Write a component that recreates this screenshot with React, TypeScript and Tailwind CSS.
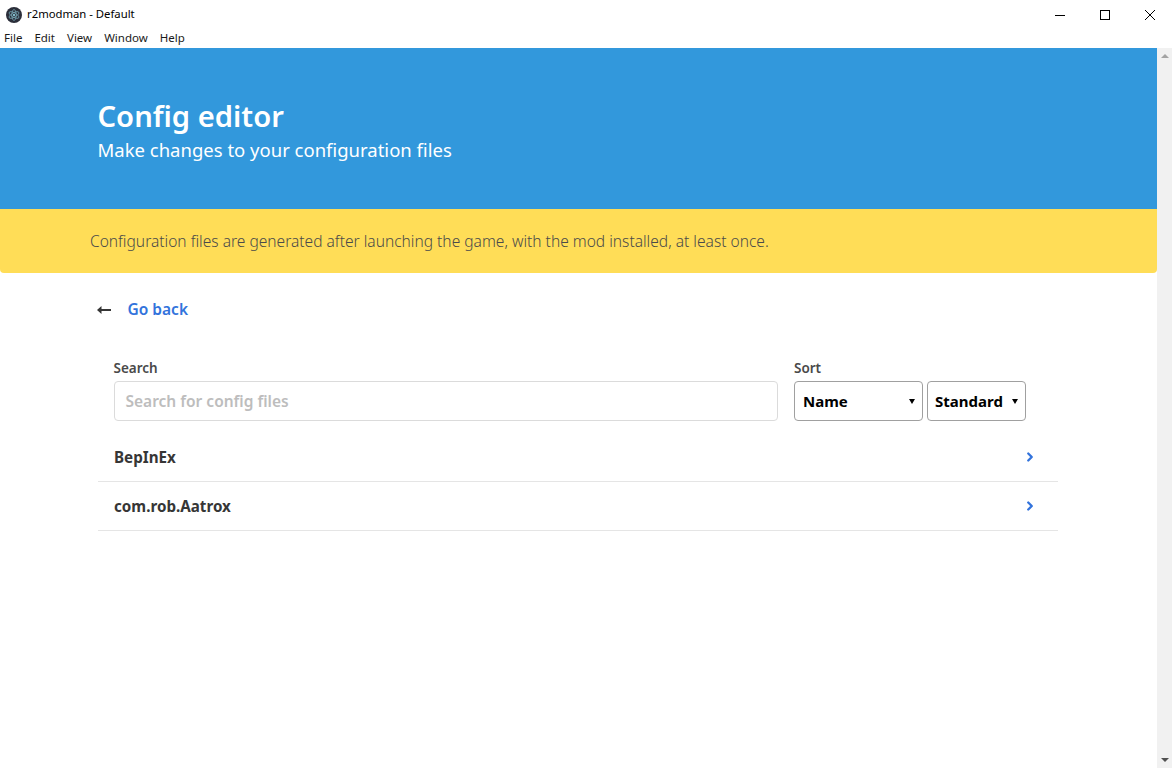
import React from 'react';
import { ChevronRight } from 'lucide-react';

const MENU = ['File', 'Edit', 'View', 'Window', 'Help'];
const CONFIGS = ['BepInEx', 'com.rob.Aatrox'];

const ElectronLogo = () => (
  <svg width="16" height="16" viewBox="0 0 16 16" className="shrink-0">
    <circle cx="8" cy="8" r="8" fill="#2b2e3a" />
    <g fill="none" stroke="#9feaf9" strokeWidth="0.6" opacity="0.8">
      <ellipse cx="8" cy="8" rx="5.5" ry="2.2" transform="rotate(30 8 8)" />
      <ellipse cx="8" cy="8" rx="5.5" ry="2.2" transform="rotate(90 8 8)" />
      <ellipse cx="8" cy="8" rx="5.5" ry="2.2" transform="rotate(150 8 8)" />
    </g>
    <circle cx="8" cy="8" r="1" fill="#9feaf9" />
  </svg>
);

const WindowButtons = () => (
  <div className="flex items-center text-black">
    <div className="w-[45px] h-[30px] flex items-center justify-center">
      <svg width="10" height="10" viewBox="0 0 10 10"><path d="M0 5.5h10" stroke="currentColor" /></svg>
    </div>
    <div className="w-[45px] h-[30px] flex items-center justify-center">
      <svg width="10" height="10" viewBox="0 0 10 10"><rect x="0.5" y="0.5" width="9" height="9" fill="none" stroke="currentColor" /></svg>
    </div>
    <div className="w-[45px] h-[30px] flex items-center justify-center">
      <svg width="10" height="10" viewBox="0 0 10 10"><path d="M0 0l10 10M10 0L0 10" stroke="currentColor" /></svg>
    </div>
  </div>
);

const Scrollbar = () => (
  <div className="w-[15px] shrink-0 bg-[#f1f1f1] flex flex-col justify-between items-center py-[6px]">
    <div className="w-0 h-0 border-x-[4px] border-x-transparent border-b-[4px] border-b-[#a3a3a3]" />
    <div className="w-0 h-0 border-x-[4px] border-x-transparent border-t-[4px] border-t-[#505050]" />
  </div>
);

const SelectBox = ({ label, width, inset }: { label: string; width: string; inset: string }) => (
  <div className={`${width} ${inset} h-[40px] border border-[#a0a0a0] rounded-[4px] bg-white flex items-center justify-between pr-[7px] text-black font-bold text-[15px]`}>
    <span>{label}</span>
    <span className="w-0 h-0 border-x-[3px] border-x-transparent border-t-[5px] border-t-black" />
  </div>
);

export default function App() {
  return (
    <div className="w-[1172px] h-[768px] overflow-hidden flex flex-col bg-white font-['Noto_Sans','Open_Sans',sans-serif]">
      <div className="h-[30px] flex items-center justify-between shrink-0">
        <div className="flex items-center gap-[5px] pl-[6px] text-[11.3px] text-black">
          <ElectronLogo />
          <span className="-translate-y-px">r2modman - Default</span>
        </div>
        <WindowButtons />
      </div>
      <div className="h-[16px] mb-[2px] flex items-center gap-[12px] pl-[4px] text-[11.5px] text-[#1a1a1a] shrink-0">
        {MENU.map((item) => (
          <span key={item}>{item}</span>
        ))}
      </div>

      <div className="flex flex-1 min-h-0">
        <div className="flex-1 min-w-0">
          <div className="h-[161px] bg-[#3298dc] text-white px-[98px] pt-[48px]">
            <h1 className="text-[29.2px] leading-[40px] font-semibold -ml-[0.5px]">Config editor</h1>
            <p className="text-[18.5px] leading-[28px] -ml-[0.5px]">Make changes to your configuration files</p>
          </div>
          <div className="h-[64px] bg-[#ffdd57] rounded-b-[4px] px-[90px] flex items-center text-[15.55px] font-light text-[#4a4a4a]">
            <span className="translate-y-px">Configuration files are generated after launching the game, with the mod installed, at least once.</span>
          </div>

          <div className="px-[98px]">
            <div className="flex items-center h-[24px] mt-[25px] gap-[15.5px]">
              <svg width="15" height="10" viewBox="0 0 15 10" className="text-[#363636] shrink-0 -ml-px">
                <path d="M0 5l4.5-4v3H14v2H4.5v3z" fill="currentColor" />
              </svg>
              <span className="text-[15.5px] font-semibold text-[#3273dc]">Go back</span>
            </div>

            <div className="flex items-end mt-[35px] pl-[15.5px] pr-[33px]">
              <div className="flex-1 min-w-0">
                <div className="text-[13.5px] font-semibold leading-[22px] text-[#4a4a4a] mb-[2px]">Search</div>
                <div className="h-[40px] border border-[#dbdbdb] rounded-[4px] flex items-center px-[11px] text-[15.5px] font-semibold text-[#bdbdbd]">
                  <span className="translate-y-px">Search for config files</span>
                </div>
              </div>
              <div className="ml-[16px]">
                <div className="text-[13.5px] font-semibold leading-[22px] text-[#4a4a4a] mb-[2px]">Sort</div>
                <div className="flex gap-[4px]">
                  <SelectBox label="Name" width="w-[129px]" inset="pl-[8px]" />
                  <SelectBox label="Standard" width="w-[99px]" inset="pl-[7px]" />
                </div>
              </div>
            </div>

            <div className="mt-[12px] w-[960px]">
              {CONFIGS.map((name) => (
                <div key={name} className="h-[49px] border-b border-[#e5e5e5] flex items-center justify-between pl-[16px] pr-[21.5px]">
                  <span className="text-[15.2px] font-bold text-[#363636]">{name}</span>
                  <ChevronRight size={14} strokeWidth={4} className="text-[#3273dc]" />
                </div>
              ))}
            </div>
          </div>
        </div>
        <Scrollbar />
      </div>
    </div>
  );
}
